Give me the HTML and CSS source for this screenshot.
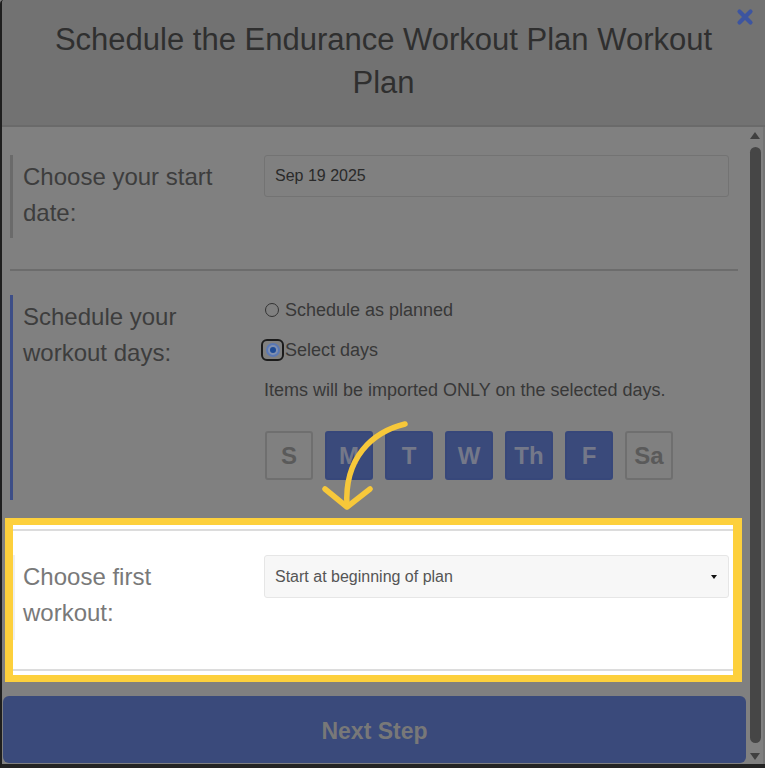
FILE: index.html
```html
<!DOCTYPE html>
<html lang="en">
<head>
<meta charset="utf-8">
<title>Schedule Workout Plan</title>
<link rel="stylesheet" href="styles.css">
</head>
<body>
<div class="modal">
  <header class="modal-header">
    <h1 class="title">Schedule the Endurance Workout Plan Workout Plan</h1>
    <button class="close" aria-label="Close">
      <svg viewBox="0 0 18 18" width="18" height="18"><path d="M3.5 3.5 L14.5 14.5 M14.5 3.5 L3.5 14.5" stroke="#3d55a0" stroke-width="4.2" stroke-linecap="round" fill="none"/></svg>
    </button>
  </header>
  <div class="modal-main">
    <div class="content">
      <section class="field field-date">
        <div class="label">Choose your start date:</div>
        <div class="control"><div class="input">Sep 19 2025</div></div>
      </section>
      <hr class="divider">
      <section class="field field-days">
        <div class="label">Schedule your workout days:</div>
        <div class="control">
          <div class="radio-row"><span class="radio"></span><span>Schedule as planned</span></div>
          <div class="radio-row"><span class="radio-focus"><span class="radio checked"></span></span><span>Select days</span></div>
          <p class="hint">Items will be imported ONLY on the selected days.</p>
          <div class="days">
            <span class="day">S</span>
            <span class="day on">M</span>
            <span class="day on">T</span>
            <span class="day on">W</span>
            <span class="day on">Th</span>
            <span class="day on">F</span>
            <span class="day">Sa</span>
          </div>
        </div>
      </section>
      <div class="highlight">
        <hr class="divider light">
        <section class="field field-first">
          <div class="label">Choose first workout:</div>
          <div class="control">
            <div class="select"><span>Start at beginning of plan</span><span class="caret"></span></div>
          </div>
        </section>
        <hr class="divider light bottom">
      </div>
      <button class="next">Next Step</button>
    </div>
    <div class="scrollbar">
      <span class="sb-up"></span>
      <span class="sb-thumb"></span>
      <span class="sb-down"></span>
    </div>
  </div>
  <svg class="arrow" viewBox="0 0 765 768" width="765" height="768">
    <path d="M405 424 C 372 432 344 458 347 506" stroke="#f7c83a" stroke-width="5.5" fill="none" stroke-linecap="round"/>
    <path d="M325 489 L347 507 L370 489" stroke="#f7c83a" stroke-width="5.5" fill="none" stroke-linecap="round" stroke-linejoin="round"/>
  </svg>
</div>
</body>
</html>
```

FILE: styles.css
```css
* { box-sizing: border-box; }
html, body { margin: 0; padding: 0; }
body {
  font-family: "Liberation Sans", Arial, Helvetica, sans-serif;
  background: #808080;
  width: 765px;
  height: 768px;
  overflow: hidden;
}
.modal {
  position: relative;
  width: 765px;
  height: 768px;
  display: flex;
  flex-direction: column;
  background: #808080;
  border-left: 2px solid #1e1e1e;
  border-bottom: 4px solid #232323;
  border-top-left-radius: 4px;
  overflow: hidden;
}
.modal-header {
  position: relative;
  flex: none;
  height: 127px;
  background: #727272;
  border-bottom: 2px solid #6a6a6a;
  padding: 18px 40px 0;
}
.title {
  margin: 0;
  text-align: center;
  font-weight: 400;
  font-size: 31px;
  line-height: 43px;
  color: #2f2f2f;
}
.close {
  position: absolute;
  top: 7px;
  right: 10px;
  width: 20px;
  height: 20px;
  padding: 1px;
  border: 0;
  background: transparent;
}
.close svg { display: block; }
.modal-main {
  flex: 1;
  display: flex;
  min-height: 0;
}
.content {
  flex: 1;
  min-width: 0;
  padding: 28px 8px 0 8px;
  display: flex;
  flex-direction: column;
}
.field {
  display: grid;
  grid-template-columns: 241px 1fr;
  border-left: 3px solid #6a6a6a;
  padding: 0 9px 0 10px;
}
.label {
  margin-top: 4px;
  padding-right: 30px;
  font-size: 24px;
  line-height: 36px;
  color: #3d3d3d;
}
.field-date { height: 83px; }
.input {
  height: 42px;
  border: 1px solid #737373;
  border-radius: 3px;
  padding: 0 10px;
  font-size: 16px;
  line-height: 40px;
  color: #2a2a2a;
}
.divider {
  margin: 31px 0 0;
  border: 0;
  height: 2px;
  background: #6c6c6c;
}
.field-days {
  margin-top: 24px;
  border-left-color: #3d4e87;
  padding-bottom: 20px;
}
.radio-row {
  display: flex;
  align-items: center;
  height: 30px;
  margin-bottom: 10px;
  font-size: 18px;
  color: #383838;
}
.radio {
  width: 14px;
  height: 14px;
  margin: 0 6px 0 1px;
  border: 1px solid #333;
  border-radius: 50%;
  flex: none;
}
.radio-focus {
  display: flex;
  align-items: center;
  justify-content: center;
  width: 23px;
  height: 22px;
  margin: 0 1px 0 -3px;
  border: 2px solid #1b1b1b;
  border-radius: 6px;
  flex: none;
}
.radio.checked {
  margin: 0;
  position: relative;
  border: 2px solid #5a78b5;
  background: #8090b0;
}
.radio.checked::after {
  content: "";
  position: absolute;
  left: 2px;
  top: 2px;
  width: 6px;
  height: 6px;
  border-radius: 50%;
  background: #1c4b98;
}
.hint {
  margin: 0;
  font-size: 18px;
  line-height: 30px;
  color: #383838;
}
.days {
  display: flex;
  gap: 12px;
  margin: 26px 0 0 1px;
}
.day {
  width: 48px;
  height: 49px;
  display: flex;
  align-items: center;
  justify-content: center;
  border: 2px solid #6f6f6f;
  border-radius: 3px;
  font-weight: 700;
  font-size: 24px;
  color: #5a5a5a;
}
.day.on {
  background: #3a4a7b;
  border-color: #37477a;
  color: #747889;
}
.highlight {
  margin: 18px -4px 0 -5px;
  border-style: solid;
  border-color: #fdd03c;
  border-width: 7px 9px 7px 8px;
  background: #ffffff;
  padding: 4px 0;
}
.divider.light {
  margin: 0;
  background: #dcdcdc;
}
.divider.light.bottom { margin-top: 29px; }
.field-first {
  margin-top: 24px;
  height: 85px;
  border-left: 2px solid #efefef;
  padding: 0 4px 0 8px;
}
.field-first .label { color: #797979; }
.select {
  height: 43px;
  display: flex;
  align-items: center;
  justify-content: space-between;
  background: #f7f7f7;
  border: 1px solid #e6e6e6;
  border-radius: 3px;
  padding: 0 11px 0 10px;
  font-size: 16px;
  color: #555;
}
.caret {
  width: 0;
  height: 0;
  border-top: 4px solid #111;
  border-left: 3.5px solid transparent;
  border-right: 3.5px solid transparent;
}
.next {
  margin: 14px -8px 0 -7px;
  height: 67px;
  flex: none;
  border: 0;
  border-radius: 6px;
  padding-top: 5px;
  background: #3a4a7b;
  font-family: inherit;
  font-weight: 700;
  font-size: 23px;
  color: #787878;
}
.scrollbar {
  flex: none;
  width: 19px;
  display: flex;
  flex-direction: column;
  align-items: flex-start;
  padding: 5px 0 4px 4px;
  border-right: 2px solid #747474;
}
.sb-up, .sb-down {
  width: 0;
  height: 0;
  margin-left: 0;
  border-left: 5.5px solid transparent;
  border-right: 5.5px solid transparent;
}
.sb-up { border-bottom: 7px solid #404040; }
.sb-down { border-top: 7px solid #404040; margin-top: 10px; }
.sb-thumb {
  flex: 1;
  width: 11px;
  margin-top: 8px;
  background: #464646;
  border-radius: 6px;
}
.arrow {
  position: absolute;
  left: -2px;
  top: 0;
  pointer-events: none;
}
```
